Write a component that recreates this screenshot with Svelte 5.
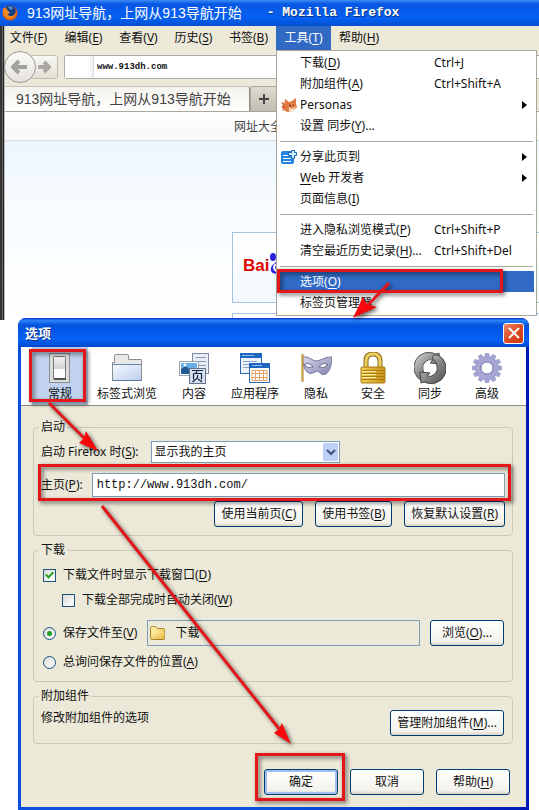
<script lang="ts">
	type MenuItem = { label: string; keys?: string; sub?: boolean; icon?: string; active?: boolean };

	// the underscore marks the access key
	const menus = ['文件(_F)', '编辑(_E)', '查看(_V)', '历史(_S)', '书签(_B)', '工具(_T)', '帮助(_H)'];

	const groups: MenuItem[][] = [
		[
			{ label: '下载(_D)', keys: 'Ctrl+J' },
			{ label: '附加组件(_A)', keys: 'Ctrl+Shift+A' },
			{ label: 'Personas', sub: true, icon: 'fox' },
			{ label: '设置 同步(_Y)...' }
		],
		[
			{ label: '分享此页到', sub: true, icon: 'share' },
			{ label: '_Web 开发者', sub: true },
			{ label: '页面信息(_I)' }
		],
		[
			{ label: '进入隐私浏览模式(_P)', keys: 'Ctrl+Shift+P' },
			{ label: '清空最近历史记录(_H)...', keys: 'Ctrl+Shift+Del' }
		],
		[{ label: '选项(_O)', active: true }, { label: '标签页管理器' }]
	];

	const panes = ['常规', '标签式浏览', '内容', '应用程序', '隐私', '安全', '同步', '高级'];
	const teeth = [0, 30, 60, 90, 120, 150, 180, 210, 240, 270, 300, 330];

	let current = $state('常规');
	let address = $state('www.913dh.com');
	let home = $state('http://www.913dh.com/');
	let showWindow = $state(true);
	let autoClose = $state(false);
	let saveMode = $state('folder');
</script>

{#snippet keyed(label: string)}
	{@const at = label.indexOf('_')}
	{#if at < 0}{label}{:else}{label.slice(0, at)}<u>{label[at + 1]}</u>{label.slice(at + 2)}{/if}
{/snippet}

{#snippet paneIcon(name: string)}
	<svg width="32" height="32" viewBox="0 0 32 32" aria-hidden="true">
		{#if name === '常规'}
			<rect x="5.500" y="1.500" width="20" height="29" fill="#dcdcdc" stroke="#8c8c8c" />
			<rect x="9.500" y="4.500" width="12" height="23" rx="1" fill="url(#switch)" stroke="#777" />
			<path d="M10 17h11v9H10z" fill="#fff" />
			<path d="M10 27h12" stroke="#555" stroke-width="2" />
		{:else if name === '标签式浏览'}
			<path d="M1.500 28.500V10.500h2v-7q0-1 1-1h12q1 0 1 1v4h13v21z" fill="#e8e8e8" stroke="#8d8d8d" />
			<path d="M2 13h28v15H2z" fill="url(#tab)" />
			<path d="M2 12.500h28" stroke="#6488b4" />
			<path d="M1.500 28.500h29" stroke="#65789a" />
		{:else if name === '内容'}
			<rect x="14.500" y="1.500" width="16" height="20" fill="#e8ecf4" stroke="#7f8ba0" />
			<path d="M18 5.500h10M18 9.500h10M18 13.500h10" stroke="#8b97b0" />
			<rect x="1.500" y="9.500" width="19" height="14" fill="#fff" stroke="#9aa5b5" />
			<path d="M3 11h16v6H3z" fill="#69aee8" />
			<path d="M3 17l5-3 4 4 3-2 4 2v4H3z" fill="#225c96" />
			<circle cx="7" cy="13" r="1.500" fill="#fff" />
			<rect x="11.500" y="16.500" width="16" height="15" fill="#d6e0f1" stroke="#64738c" />
			<path d="M14 18.500h11M19 19l-1 2M15.500 21.500h8v6M15.500 21.500v6M19.500 23v3l-5 4M20 27l4 3" fill="none" stroke="#14233e" stroke-width="1.200" />
		{:else if name === '应用程序'}
			<rect x="1.500" y="1.500" width="21" height="20" fill="#edf3fc" stroke="#2c66b0" />
			<path d="M1 1h22v5H1z" fill="#1f66c0" />
			<path d="M3 3.500h12" stroke="#91bbee" />
			<path d="M4 9.500h14M4 12.500h6M4 15.500h6" stroke="#90a6c8" />
			<rect x="10.500" y="11.500" width="20" height="19" fill="#fff" stroke="#2c66b0" />
			<path d="M10 11h21v5H10z" fill="#1f66c0" />
			<path d="M13 13.500h10" stroke="#91bbee" />
			<path d="M13 18.500h15v10H13zM13 21.500h15M13 25.500h15M16.500 18v10M20.500 18v10M24.500 18v10" fill="none" stroke="#e3a267" />
		{:else if name === '隐私'}
			<path d="M2 5q5-1 9 2 3 2 6 2 4-1 8-3 3-1 7-1 0 12-6 17-4 2-7-2-2-2-4 0-4 3-8 0-4-4-5-15z" fill="url(#mask)" stroke="#77779f" />
			<path d="M4 13q5-4 9 2-5 2-9-2zM19 15q4-6 9-2-4 4-9 2z" fill="#fff" stroke="#66668f" />
			<path d="M2.500 2v28" stroke="#a97b25" stroke-width="2" />
			<path d="M2 2v28" stroke="#e5c16b" />
		{:else if name === '安全'}
			<path d="M9 17V9q0-7 7-7t7 7v8" fill="none" stroke="#8e6d17" stroke-width="5" />
			<path d="M9 17V9q0-7 7-7t7 7v8" fill="none" stroke="#ebcd62" stroke-width="3" />
			<rect x="4" y="15" width="24" height="16" rx="1" fill="url(#lock)" stroke="#a47b14" />
			<path d="M5 18.500h22M5 21.500h22M5 24.500h22M5 27.500h22" stroke="#a97a10" />
			<path d="M5 19.500h14M5 22.500h14M5 25.500h14" stroke="#fff0a2" />
		{:else if name === '同步'}
			<path d="M8 29A15 15 0 0 1 22 2l3-1 1 11-10-1 3-3A8 8 0 0 0 9 18q0 5 5 8-1 4-6 3z" fill="url(#sync)" stroke="#555" />
			<path d="M24 3A15 15 0 0 1 10 30l-3 1-1-11 10 1-3 3A8 8 0 0 0 23 14q0-5-5-8 1-4 6-3z" fill="url(#sync)" stroke="#444" />
		{:else}
			{#each teeth as angle}
				<path d="M13 6l1-5h4l1 5z" transform="rotate({angle} 16 16)" fill="#a3a3d1" />
			{/each}
			<circle cx="16" cy="16" r="8" fill="none" stroke="#8f8fc0" stroke-width="7" />
			<circle cx="16" cy="16" r="9" fill="none" stroke="#a6a6d4" stroke-width="5" />
			<circle cx="16" cy="16" r="6" fill="#fff" stroke="#8080ab" />
		{/if}
	</svg>
{/snippet}

<svg class="defs" width="0" height="0" aria-hidden="true">
	<defs>
		<linearGradient id="switch" x2="0" y2="1"><stop stop-color="#f4f4f4" /><stop offset="1" stop-color="#b5b5b5" /></linearGradient>
		<linearGradient id="tab" x2="1" y2="1"><stop stop-color="#f5f9ff" /><stop offset="1" stop-color="#bdd0ed" /></linearGradient>
		<linearGradient id="mask" x2="1" y2="1"><stop stop-color="#dadaec" /><stop offset="1" stop-color="#8383b0" /></linearGradient>
		<linearGradient id="lock" x2="1" y2="0"><stop stop-color="#f2cd51" /><stop offset="1" stop-color="#c8931b" /></linearGradient>
		<linearGradient id="sync" x2="1" y2="1"><stop stop-color="#ddd" /><stop offset=".5" stop-color="#888" /><stop offset="1" stop-color="#4f4f4f" /></linearGradient>
		<linearGradient id="folder" x2="1" y2="1"><stop stop-color="#fff6b5" /><stop offset="1" stop-color="#e8b83e" /></linearGradient>
		<radialGradient id="flame"><stop stop-color="#ffc835" /><stop offset="1" stop-color="#dc5209" /></radialGradient>
	</defs>
</svg>

<div class="page">
	<section class="browser">
		<header class="titlebar">
			<svg width="16" height="18" viewBox="0 0 16 18" aria-hidden="true">
				<circle cx="8" cy="9" r="7.500" fill="url(#flame)" />
				<path d="M4 3q5-4 9 1 2 4-1 7-4 3-7-1l3-1-3-3z" fill="#173f85" />
				<path d="M6 3q3-2 5 1L9 6z" fill="#569bd9" />
				<path d="M1 4l3 1 3 3-2 2q3 4 8 1-4 5-9 2-4-4-3-9z" fill="#f38a1c" />
			</svg>
			<span class="caption">913网址导航，上网从913导航开始</span>
			<span class="product">- Mozilla Firefox</span>
		</header>

		<nav class="menubar">
			{#each menus as menu}
				<div class="menu">
					<button class="menu-name" class:open={menu.startsWith('工具')}>{@render keyed(menu)}</button>
					{#if menu.startsWith('工具')}
						<div class="popup">
							{#each groups as group, i}
								{#if i > 0}<hr />{/if}
								{#each group as item}
									<button class="item" class:active={item.active}>
										<span class="item-icon">
											{#if item.icon === 'fox'}
												<svg width="16" height="16" viewBox="0 0 16 16" aria-hidden="true">
													<path d="M4 2l4 3 3-1 4-3v6l1 3-4 4-6 1-3-2-2 1 1-3-2-2 3 0z" fill="#e17a42" />
													<path d="M0 5l3 1 1 5-3 0 1-3z" fill="#c75826" />
													<path d="M8 10l3 2 4-3-3 5-4 0z" fill="#ffe3c5" />
													<path d="M8 8l2 1M12 8l1 0" stroke="#5b2512" />
												</svg>
											{:else if item.icon === 'share'}
												<svg width="17" height="16" viewBox="0 0 17 16" aria-hidden="true">
													<rect x="0" y="2" width="13" height="13" rx="2" fill="#2583e4" />
													<path d="M2 6.500h6M2 9.500h8M2 12.500h8" stroke="#fff" />
													<path d="M10.500 1.500h3v2h2v3h-2v3h-3v-3h-3v-3h3z" fill="#c9efff" stroke="#1b64b8" />
												</svg>
											{/if}
										</span>
										<span class="item-label">{@render keyed(item.label)}</span>
										<span class="item-keys">{item.keys ?? ''}</span>
										{#if item.sub}
											<svg width="5" height="8" viewBox="0 0 5 8" aria-hidden="true"><path d="M0 0l5 4-5 4z" /></svg>
										{/if}
									</button>
								{/each}
							{/each}
						</div>
					{/if}
				</div>
			{/each}
		</nav>

		<div class="navbar">
			<button class="back" aria-label="后退">
				<svg width="18" height="16" viewBox="0 0 18 16"><path d="M8 2L2 8l6 6M3 8h13" fill="none" stroke="#a3a39e" stroke-width="4" /></svg>
			</button>
			<button class="forward" aria-label="前进">
				<svg width="14" height="14" viewBox="0 0 14 14"><path d="M7 2l5 5-5 5M11 7H1" fill="none" stroke="#a9a8a2" stroke-width="4" /></svg>
			</button>
			<div class="urlbar">
				<span class="favicon"></span>
				<input aria-label="地址" bind:value={address} />
			</div>
		</div>

		<div class="tabs">
			<button class="tab">913网址导航，上网从913导航开始</button>
			<button class="new-tab" aria-label="新标签页">
				<svg width="12" height="12" viewBox="0 0 12 12"><path d="M6 1v10M1 6h10" stroke="#454545" stroke-width="2" /></svg>
			</button>
		</div>

		<div class="site">
			<div class="site-links"><a href="#all">网址大全</a></div>
			<div class="site-body">
				<a class="logo" href="#baidu">
					<span>Bai</span>
					<svg width="24" height="28" viewBox="0 0 24 28" aria-hidden="true">
						<g fill="#2a1fdc">
							<ellipse cx="4" cy="9" rx="3" ry="4" /><ellipse cx="10" cy="5" rx="3" ry="4" /><ellipse cx="17" cy="6" rx="3" ry="4" />
							<path d="M11 11q3 0 5 5 6 3 3 8-3 3-8 1-7 2-9-2-1-5 4-8 2-4 5-4z" />
						</g>
						<path d="M10 16q-5 0-5 4 1 4 5 3z" fill="none" stroke="#fff" stroke-width="2" />
					</svg>
				</a>
				<div class="next-card"></div>
			</div>
		</div>
	</section>

	<section class="dialog">
		<header class="dialog-title">
			<h1>选项</h1>
			<button class="close" aria-label="关闭">
				<svg width="12" height="12" viewBox="0 0 12 12"><path d="M1 1l10 10M11 1L1 11" stroke="#fff" stroke-width="2" /></svg>
			</button>
		</header>

		<div class="panes">
			{#each panes as pane}
				<button class="pane" class:selected={pane === current} onclick={() => (current = pane)}>
					{@render paneIcon(pane)}
					<span>{pane}</span>
				</button>
			{/each}
		</div>

		<form class="body" onsubmit={(e) => e.preventDefault()}>
			<fieldset class="startup">
				<legend>启动</legend>
				<div class="row start-row">
					<label for="start">启动 Firefox 时(<u>S</u>):</label>
					<div class="select">
						<select id="start">
							<option>显示我的主页</option>
							<option>显示空白页</option>
						</select>
						<svg width="15" height="18" viewBox="0 0 15 18" aria-hidden="true">
							<rect width="15" height="18" rx="1" fill="#bfd0f7" />
							<path d="M4 7l4 4 4-4" fill="none" stroke="#3f5379" stroke-width="2" />
						</svg>
					</div>
				</div>
				<div class="row home-row">
					<label for="home">主页(<u>P</u>):</label>
					<input id="home" class="home" bind:value={home} />
				</div>
				<div class="row home-buttons">
					<button class="btn">使用当前页(<u>C</u>)</button>
					<button class="btn">使用书签(<u>B</u>)</button>
					<button class="btn">恢复默认设置(<u>R</u>)</button>
				</div>
			</fieldset>

			<fieldset>
				<legend>下载</legend>
				<label class="check"><input type="checkbox" bind:checked={showWindow} />下载文件时显示下载窗口(<u>D</u>)</label>
				<label class="check nested"><input type="checkbox" bind:checked={autoClose} />下载全部完成时自动关闭(<u>W</u>)</label>
				<div class="row save">
					<label class="check"><input type="radio" value="folder" bind:group={saveMode} /><span>保存文件至(<u>V</u>)</span></label>
					<div class="folder">
						<svg width="16" height="14" viewBox="0 0 16 14" aria-hidden="true">
							<path d="M.5 11.500v-9q0-2 2-2h3l2 2h6q1 0 1 2v8q0 1-1 1h-11q-2 0-2-2z" fill="url(#folder)" stroke="#a9812a" />
							<path d="M1.500 5.500h13v6q0 1-1 1h-11z" fill="url(#folder)" />
						</svg>
						<input aria-label="下载文件夹" value="下载" readonly />
					</div>
					<button class="btn">浏览(<u>O</u>)...</button>
				</div>
				<label class="check"><input type="radio" value="ask" bind:group={saveMode} />总询问保存文件的位置(<u>A</u>)</label>
			</fieldset>

			<fieldset class="addons">
				<legend>附加组件</legend>
				<div class="row">
					<p>修改附加组件的选项</p>
					<button class="btn">管理附加组件(<u>M</u>)...</button>
				</div>
			</fieldset>

			<footer>
				<button class="btn default">确定</button>
				<button class="btn">取消</button>
				<button class="btn">帮助(<u>H</u>)</button>
			</footer>
		</form>
	</section>

	<!-- step marks drawn over both windows -->
	<svg class="marks" width="539" height="810" viewBox="0 0 539 810" aria-hidden="true">
		<g fill="none" stroke="#e3161a" stroke-width="3">
			<rect x="278.500" y="270.500" width="223" height="21" />
			<rect x="30.500" y="350.500" width="54" height="50" />
			<rect x="39.500" y="465.500" width="470" height="34" />
			<rect x="256.500" y="754.500" width="87" height="45" />
			<path d="M389 283L366 307M49 403L86 440M102 506L280 730" />
		</g>
		<g fill="#f5090b">
			<path d="M353 318l10-21 4 7 10 3z" />
			<path d="M98 451l-19-8 5-5 2-7z" />
			<path d="M291 744l-17-11 5-4 3-6z" />
		</g>
	</svg>
</div>

<style>
	:global(body) {
		margin: 0;
		background: #fff;
	}

	.page {
		position: relative;
		overflow: hidden;
		font: 12px/16px "Noto Sans", "Noto Sans CJK SC", sans-serif;
		color: #111;
	}

	.page * {
		box-sizing: border-box;
	}

	.defs {
		position: absolute;
	}

	button {
		margin: 0;
		padding: 0;
		border: 0;
		background: none;
		font: inherit;
		color: inherit;
		white-space: nowrap;
	}

	input,
	select {
		margin: 0;
		font: inherit;
		color: inherit;
	}

	u {
		text-underline-offset: 2px;
	}

	.browser {
		position: relative;
		background: #ece9d8;
	}

	.browser::before {
		content: '';
		position: absolute;
		top: 26px;
		bottom: 0;
		left: 0;
		width: 5px;
		background: linear-gradient(90deg, #333 0 2px, #666 2px 3px, #222 3px 4px, #bbb 4px);
	}

	.titlebar {
		display: flex;
		align-items: center;
		height: 26px;
		padding-left: 2px;
		background: linear-gradient(#3c8df5, #0757e3 15%, #0560f2 70%, #0450d0);
		color: #fff;
	}

	.caption {
		margin-left: 9px;
		font: 14px/20px "Liberation Sans", "Noto Sans CJK SC", sans-serif;
		white-space: nowrap;
	}

	.product {
		margin-left: 25px;
		font: bold 13px/20px "Liberation Mono", monospace;
		text-shadow: 1px 1px #0a2f80;
		white-space: nowrap;
	}

	.menubar {
		display: flex;
		height: 24px;
		padding-left: 1px;
	}

	.menu {
		position: relative;
	}

	.menu-name {
		min-width: 55px;
		height: 24px;
		padding: 0 8px;
	}

	.menu-name.open {
		background: #316ac5;
		color: #fff;
	}

	.popup {
		position: absolute;
		z-index: 2;
		top: 24px;
		left: 0;
		width: 261px;
		padding: 1px 2px 2px;
		border: 1px solid #aca899;
		background: #fff;
	}

	.popup hr {
		height: 1px;
		margin: 5px 1px 4px;
		border: 0;
		background: #aca899;
	}

	.item {
		display: flex;
		align-items: center;
		width: 100%;
		height: 21px;
		padding: 0 7px 0 2px;
		text-align: left;
	}

	.item.active {
		background: #316ac5;
		color: #fff;
	}

	.item-icon {
		display: flex;
		width: 19px;
	}

	.item-label {
		width: 134px;
	}

	.item-keys {
		flex: 1;
	}

	.navbar {
		display: flex;
		align-items: center;
		height: 34px;
		padding-left: 4px;
	}

	.back {
		display: grid;
		place-items: center;
		z-index: 1;
		width: 32px;
		height: 32px;
		border: 1px solid #999;
		border-radius: 50%;
		background: linear-gradient(#fcfcfa, #e4e2da);
	}

	.forward {
		display: grid;
		place-items: center;
		width: 28px;
		height: 24px;
		margin-left: -6px;
		border: 1px solid #c0bdb0;
		border-radius: 3px;
		background: linear-gradient(#f8f7f2, #e4e1d5);
	}

	.urlbar {
		display: flex;
		flex: 1;
		height: 24px;
		margin-left: 6px;
		border: 1px solid #aaa;
		border-right: 0;
		border-radius: 3px 0 0 3px;
		background: #fff;
	}

	.favicon {
		width: 29px;
		border-right: 1px solid #ddd;
		background: linear-gradient(90deg, #fff 80%, #eee);
	}

	.urlbar input {
		flex: 1;
		min-width: 0;
		padding: 0 3px;
		border: 0;
		background: none;
		font: bold 9px/16px "Liberation Mono", monospace;
	}

	.tabs {
		display: flex;
		height: 28px;
		padding: 2px 0 0 4px;
		border-bottom: 1px solid #aaa89d;
	}

	.tab {
		width: 246px;
		padding: 0 12px;
		border-top: 1px solid #c5c3b8;
		border-right: 1px solid #8f8d84;
		border-radius: 3px 3px 0 0;
		background: linear-gradient(#f4f3ec, #fff);
		color: #444;
		font: 14px/20px "Liberation Sans", "Noto Sans CJK SC", sans-serif;
		text-align: left;
	}

	.new-tab {
		display: grid;
		place-items: center;
		width: 28px;
		border: 1px solid #aaa89d;
		border-bottom: 0;
		border-radius: 3px 3px 0 0;
		background: linear-gradient(#dedcd1, #c0beb2);
	}

	.site {
		margin-left: 5px;
		background: #fff;
	}

	.site-links {
		height: 29px;
		padding: 7px 0 0 229px;
		border-bottom: 1px solid #d5dbe2;
		background: linear-gradient(#fff, #f7f8f9);
	}

	.site-links a {
		color: #444;
		text-decoration: none;
	}

	.site-body {
		display: grid;
		gap: 10px;
		padding: 91px 0 0 227px;
		background: linear-gradient(#edf6ff, #f8fcff 40%, #fff);
	}

	.logo {
		display: flex;
		align-items: center;
		height: 71px;
		padding: 0 0 12px 10px;
		border: 1px solid #a8c3dd;
		border-right: 0;
		background: linear-gradient(#fff, #f2f8fe);
		color: #e10602;
		font: bold 17px/20px "Liberation Sans", sans-serif;
		text-decoration: none;
	}

	.logo span {
		margin-top: 8px;
	}

	.next-card {
		height: 7px;
		border: 1px solid #a8c3dd;
		border-width: 1px 0 0 1px;
	}

	.dialog {
		position: relative;
		z-index: 3;
		margin: -2px 10px 1px 18px;
		padding: 0 3px 3px;
		border-radius: 8px 8px 0 0;
		background: linear-gradient(90deg, #0a50dc, #0a50dc 50%, #0019b5);
	}

	.dialog-title {
		display: flex;
		align-items: center;
		justify-content: space-between;
		height: 29px;
		margin: 0 -3px;
		padding: 1px 5px 0 7px;
		border-radius: 8px 8px 0 0;
		background: linear-gradient(#0831c8, #2c83f8 8%, #0453df 25%, #0560f5 75%, #0048cb);
		color: #fff;
	}

	h1 {
		margin: 0;
		font: bold 13px/20px "Noto Sans CJK SC", sans-serif;
		text-shadow: 1px 1px #0a2f80;
	}

	.close {
		display: grid;
		place-items: center;
		width: 21px;
		height: 21px;
		border: 1px solid #fff;
		border-radius: 3px;
		background: linear-gradient(135deg, #ee8a6c, #dd4a20 50%, #c63b12);
	}

	.panes {
		display: flex;
		gap: 1px;
		height: 59px;
		padding: 0 11px;
		border-bottom: 1px solid #8b8a80;
		background: #fff;
	}

	.pane {
		display: flex;
		flex-direction: column;
		align-items: center;
		gap: 2px;
		min-width: 56px;
		padding: 5px 8px 0;
	}

	.pane.selected {
		background: #c1d2ee;
	}

	.body {
		display: grid;
		gap: 7px;
		padding: 14px 13px 12px 12px;
		background: #ece9d8;
	}

	fieldset {
		min-width: 0;
		margin: 0;
		padding: 9px 8px 10px 7px;
		border: 1px solid #cbc9b8;
		border-radius: 4px;
	}

	legend {
		padding: 0 2px;
		margin-left: -2px;
		line-height: 14px;
	}

	.row {
		display: flex;
		align-items: center;
	}

	.startup {
		padding: 7px 7px 8px;
	}

	.start-row {
		gap: 12px;
	}

	.select {
		position: relative;
		width: 189px;
	}

	select {
		display: block;
		width: 100%;
		height: 22px;
		padding: 0 3px;
		border: 1px solid #7f9db9;
		border-radius: 0;
		background: #fff;
		appearance: none;
	}

	.select svg {
		position: absolute;
		top: 2px;
		right: 2px;
		pointer-events: none;
	}

	.home-row {
		gap: 9px;
		margin: 10px 0 4px;
	}

	.home {
		flex: 1;
		min-width: 0;
		height: 24px;
		padding: 0 4px;
		border: 1px solid #7f9db9;
		background: #fff;
		font: 12px/16px "Liberation Mono", monospace;
	}

	.home-buttons {
		justify-content: flex-end;
		gap: 12px;
	}

	.btn {
		height: 26px;
		min-width: 74px;
		padding: 0 6px;
		border: 1px solid #003c74;
		border-radius: 3px;
		background: linear-gradient(#fff, #f3f2ec 85%, #d8d3c6);
	}

	.btn.default {
		box-shadow: inset 0 0 0 2px #a3bff0;
	}

	.check {
		display: flex;
		align-items: center;
		height: 18px;
		white-space: nowrap;
	}

	.check input {
		display: grid;
		place-items: center;
		flex: none;
		width: 13px;
		height: 13px;
		margin: 0 7px 0 2px;
		border: 1px solid #1c5180;
		background: linear-gradient(135deg, #dcdcd7, #fff);
		appearance: none;
	}

	.check input[type='radio'] {
		border-radius: 50%;
	}

	.check input[type='checkbox']:checked::after {
		content: '';
		width: 3px;
		height: 6px;
		margin-bottom: 2px;
		border: solid #21a121;
		border-width: 0 2px 2px 0;
		transform: rotate(45deg);
	}

	.check input[type='radio']:checked::after {
		content: '';
		width: 5px;
		height: 5px;
		border-radius: 50%;
		background: #21a121;
	}

	.nested {
		margin: 7px 0 11px 19px;
	}

	.save {
		gap: 10px;
		margin-bottom: 7px;
	}

	.folder {
		display: flex;
		align-items: center;
		flex: 1;
		gap: 9px;
		min-width: 0;
		height: 26px;
		padding-left: 2px;
		border: 1px solid #7f9db9;
	}

	.folder input {
		flex: 1;
		min-width: 0;
		padding: 0;
		border: 0;
		background: none;
	}

	.addons {
		padding: 7px 8px 7px 7px;
	}

	.addons .row {
		align-items: flex-start;
		justify-content: space-between;
	}

	p {
		margin: 0;
	}

	footer {
		display: flex;
		justify-content: flex-end;
		gap: 12px;
		margin: 18px 3px 0 0;
	}

	.marks {
		position: absolute;
		z-index: 4;
		top: 0;
		left: 0;
		pointer-events: none;
		filter: drop-shadow(2px 2px 2px rgba(0, 0, 0, 0.6));
	}
</style>
